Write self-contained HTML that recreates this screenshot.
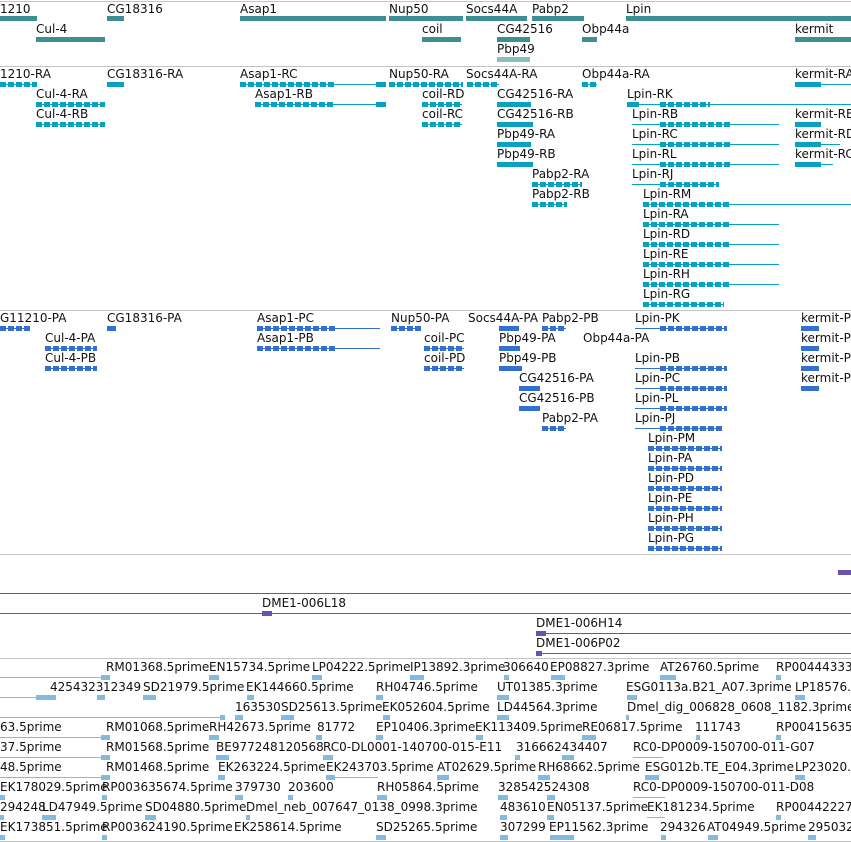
<!DOCTYPE html>
<html><head><meta charset="utf-8"><style>
body{margin:0;width:851px;height:842px;overflow:hidden;background:#fff;position:relative;font-family:"DejaVu Sans","Liberation Sans",sans-serif}
.t{position:absolute;font-size:12px;line-height:14px;white-space:nowrap;color:#111}
.b{position:absolute;height:5px}
.l{position:absolute;height:1px}
.h{position:absolute;left:0;width:851px;height:1px;background:#c4c4c4}
.T{background:#3e8f94}
.C{background:#0aa0c0}.Cl{background:#0aa0c0}
.Cg{background:repeating-linear-gradient(90deg,#0aa0c0 0 6px,transparent 6px 8px),linear-gradient(to bottom,transparent 2px,#0aa0c0 2px 3px,transparent 3px)}
.P{background:#3370d0}.Pl{background:#3370d0}
.Pg{background:repeating-linear-gradient(90deg,#3370d0 0 6px,transparent 6px 8px),linear-gradient(to bottom,transparent 2px,#3370d0 2px 3px,transparent 3px)}
.V{background:#6a52aa}
.E{background:#82bae0}
</style></head><body>
<div class="h" style="top:1px"></div>
<!-- section 1 -->
<div class="t" style="left:0;top:2px">1210</div><div class="b T" style="left:0;top:16px;width:37px"></div>
<div class="t" style="left:107px;top:2px">CG18316</div><div class="b T" style="left:107px;top:16px;width:17px"></div>
<div class="t" style="left:240px;top:2px">Asap1</div><div class="b T" style="left:240px;top:16px;width:146px"></div>
<div class="t" style="left:389px;top:2px">Nup50</div><div class="b T" style="left:389px;top:16px;width:74px"></div>
<div class="t" style="left:466px;top:2px">Socs44A</div><div class="b T" style="left:466px;top:16px;width:61px"></div>
<div class="t" style="left:532px;top:2px">Pabp2</div><div class="b T" style="left:532px;top:16px;width:52px"></div>
<div class="t" style="left:626px;top:2px">Lpin</div><div class="b T" style="left:626px;top:16px;width:225px"></div>
<div class="t" style="left:36px;top:22px">Cul-4</div><div class="b T" style="left:36px;top:37px;width:69px"></div>
<div class="t" style="left:422px;top:22px">coil</div><div class="b T" style="left:422px;top:37px;width:39px"></div>
<div class="t" style="left:497px;top:22px">CG42516</div><div class="b T" style="left:497px;top:37px;width:33px"></div>
<div class="t" style="left:582px;top:22px">Obp44a</div><div class="b T" style="left:582px;top:37px;width:15px"></div>
<div class="t" style="left:795px;top:22px">kermit</div><div class="b T" style="left:795px;top:37px;width:56px"></div>
<div class="t" style="left:497px;top:42px">Pbp49</div><div class="b T" style="left:497px;top:57px;width:33px;opacity:.6"></div>
<div class="h" style="top:66px"></div>
<!-- section 2 -->
<div class="t" style="left:0;top:67px">1210-RA</div><div class="b Cg" style="left:0;top:82px;width:37px"></div>
<div class="t" style="left:107px;top:67px">CG18316-RA</div><div class="b C" style="left:107px;top:82px;width:17px"></div>
<div class="t" style="left:240px;top:67px">Asap1-RC</div><div class="l Cl" style="left:240px;top:84px;width:146px"></div><div class="b Cg" style="left:240px;top:82px;width:95px"></div><div class="b C" style="left:376px;top:82px;width:10px"></div>
<div class="t" style="left:389px;top:67px">Nup50-RA</div><div class="b Cg" style="left:389px;top:82px;width:74px"></div>
<div class="t" style="left:466px;top:67px">Socs44A-RA</div><div class="b Cg" style="left:467px;top:82px;width:32px"></div>
<div class="t" style="left:582px;top:67px">Obp44a-RA</div><div class="b Cg" style="left:582px;top:82px;width:15px"></div>
<div class="t" style="left:795px;top:67px">kermit-RA</div><div class="l Cl" style="left:795px;top:84px;width:56px"></div><div class="b C" style="left:795px;top:82px;width:26px"></div>

<div class="t" style="left:36px;top:87px">Cul-4-RA</div><div class="b Cg" style="left:36px;top:102px;width:69px"></div>
<div class="t" style="left:255px;top:87px">Asap1-RB</div><div class="l Cl" style="left:255px;top:104px;width:131px"></div><div class="b Cg" style="left:255px;top:102px;width:80px"></div><div class="b C" style="left:376px;top:102px;width:10px"></div>
<div class="t" style="left:422px;top:87px">coil-RD</div><div class="b Cg" style="left:422px;top:102px;width:40px"></div>
<div class="t" style="left:497px;top:87px">CG42516-RA</div><div class="b C" style="left:497px;top:102px;width:34px"></div>
<div class="t" style="left:627px;top:87px">Lpin-RK</div><div class="l Cl" style="left:627px;top:104px;width:224px"></div><div class="b C" style="left:627px;top:102px;width:12px"></div><div class="b Cg" style="left:660px;top:102px;width:50px"></div>

<div class="t" style="left:36px;top:107px">Cul-4-RB</div><div class="b Cg" style="left:36px;top:122px;width:69px"></div>
<div class="t" style="left:422px;top:107px">coil-RC</div><div class="b Cg" style="left:422px;top:122px;width:40px"></div>
<div class="t" style="left:497px;top:107px">CG42516-RB</div><div class="b C" style="left:497px;top:122px;width:36px"></div>
<div class="t" style="left:632px;top:107px">Lpin-RB</div><div class="l Cl" style="left:632px;top:124px;width:147px"></div><div class="b Cg" style="left:660px;top:122px;width:70px"></div>
<div class="t" style="left:795px;top:107px">kermit-RB</div><div class="b C" style="left:795px;top:122px;width:26px"></div>

<div class="t" style="left:497px;top:127px">Pbp49-RA</div><div class="b C" style="left:497px;top:142px;width:34px"></div>
<div class="t" style="left:632px;top:127px">Lpin-RC</div><div class="l Cl" style="left:632px;top:144px;width:147px"></div><div class="b Cg" style="left:660px;top:142px;width:70px"></div>
<div class="t" style="left:795px;top:127px">kermit-RD</div><div class="l Cl" style="left:795px;top:144px;width:45px"></div><div class="b C" style="left:795px;top:142px;width:26px"></div>

<div class="t" style="left:497px;top:147px">Pbp49-RB</div><div class="b C" style="left:497px;top:162px;width:36px"></div>
<div class="t" style="left:632px;top:147px">Lpin-RL</div><div class="l Cl" style="left:632px;top:164px;width:147px"></div><div class="b Cg" style="left:660px;top:162px;width:70px"></div>
<div class="t" style="left:795px;top:147px">kermit-RC</div><div class="l Cl" style="left:795px;top:164px;width:38px"></div><div class="b C" style="left:795px;top:162px;width:26px"></div>

<div class="t" style="left:532px;top:167px">Pabp2-RA</div><div class="b Cg" style="left:532px;top:182px;width:50px"></div>
<div class="t" style="left:632px;top:167px">Lpin-RJ</div><div class="l Cl" style="left:632px;top:184px;width:87px"></div><div class="b Cg" style="left:660px;top:182px;width:59px"></div>
<div class="t" style="left:532px;top:187px">Pabp2-RB</div><div class="b Cg" style="left:532px;top:202px;width:35px"></div>
<div class="t" style="left:643px;top:187px">Lpin-RM</div><div class="l Cl" style="left:643px;top:204px;width:208px"></div><div class="b Cg" style="left:643px;top:202px;width:87px"></div>
<div class="t" style="left:643px;top:207px">Lpin-RA</div><div class="l Cl" style="left:643px;top:224px;width:136px"></div><div class="b Cg" style="left:643px;top:222px;width:87px"></div>
<div class="t" style="left:643px;top:227px">Lpin-RD</div><div class="l Cl" style="left:643px;top:244px;width:136px"></div><div class="b Cg" style="left:643px;top:242px;width:87px"></div>
<div class="t" style="left:643px;top:247px">Lpin-RE</div><div class="l Cl" style="left:643px;top:264px;width:136px"></div><div class="b Cg" style="left:643px;top:262px;width:87px"></div>
<div class="t" style="left:643px;top:267px">Lpin-RH</div><div class="l Cl" style="left:643px;top:284px;width:136px"></div><div class="b Cg" style="left:643px;top:282px;width:87px"></div>
<div class="t" style="left:643px;top:287px">Lpin-RG</div><div class="b Cg" style="left:643px;top:302px;width:81px"></div>
<div class="h" style="top:310px"></div>
<!-- section 3 -->
<div class="t" style="left:0;top:311px">G11210-PA</div><div class="b Pg" style="left:0;top:326px;width:30px"></div>
<div class="t" style="left:107px;top:311px">CG18316-PA</div><div class="b P" style="left:107px;top:326px;width:9px"></div>
<div class="t" style="left:257px;top:311px">Asap1-PC</div><div class="l Pl" style="left:257px;top:328px;width:123px"></div><div class="b Pg" style="left:257px;top:326px;width:78px"></div>
<div class="t" style="left:391px;top:311px">Nup50-PA</div><div class="b Pg" style="left:391px;top:326px;width:30px"></div>
<div class="t" style="left:468px;top:311px">Socs44A-PA</div><div class="b P" style="left:499px;top:326px;width:20px"></div>
<div class="t" style="left:542px;top:311px">Pabp2-PB</div><div class="b Pg" style="left:542px;top:326px;width:24px"></div>
<div class="t" style="left:635px;top:311px">Lpin-PK</div><div class="l Pl" style="left:635px;top:328px;width:92px"></div><div class="b Pg" style="left:660px;top:326px;width:67px"></div>
<div class="t" style="left:801px;top:311px">kermit-P</div><div class="b P" style="left:801px;top:326px;width:18px"></div>

<div class="t" style="left:45px;top:331px">Cul-4-PA</div><div class="b Pg" style="left:45px;top:346px;width:52px"></div>
<div class="t" style="left:257px;top:331px">Asap1-PB</div><div class="l Pl" style="left:257px;top:348px;width:123px"></div><div class="b Pg" style="left:257px;top:346px;width:78px"></div>
<div class="t" style="left:424px;top:331px">coil-PC</div><div class="b Pg" style="left:424px;top:346px;width:40px"></div>
<div class="t" style="left:499px;top:331px">Pbp49-PA</div><div class="b P" style="left:499px;top:346px;width:21px"></div>
<div class="t" style="left:583px;top:331px">Obp44a-PA</div>
<div class="t" style="left:801px;top:331px">kermit-P</div><div class="b P" style="left:801px;top:346px;width:18px"></div>

<div class="t" style="left:45px;top:351px">Cul-4-PB</div><div class="b Pg" style="left:45px;top:366px;width:52px"></div>
<div class="t" style="left:424px;top:351px">coil-PD</div><div class="b Pg" style="left:424px;top:366px;width:40px"></div>
<div class="t" style="left:499px;top:351px">Pbp49-PB</div><div class="b P" style="left:499px;top:366px;width:23px"></div>
<div class="t" style="left:635px;top:351px">Lpin-PB</div><div class="l Pl" style="left:635px;top:368px;width:92px"></div><div class="b Pg" style="left:660px;top:366px;width:67px"></div>
<div class="t" style="left:801px;top:351px">kermit-P</div><div class="b P" style="left:801px;top:366px;width:18px"></div>

<div class="t" style="left:519px;top:371px">CG42516-PA</div><div class="b P" style="left:519px;top:386px;width:21px"></div>
<div class="t" style="left:635px;top:371px">Lpin-PC</div><div class="l Pl" style="left:635px;top:388px;width:92px"></div><div class="b Pg" style="left:660px;top:386px;width:67px"></div>
<div class="t" style="left:801px;top:371px">kermit-P</div><div class="b P" style="left:801px;top:386px;width:18px"></div>
<div class="t" style="left:519px;top:391px">CG42516-PB</div><div class="b P" style="left:519px;top:406px;width:21px"></div>
<div class="t" style="left:635px;top:391px">Lpin-PL</div><div class="l Pl" style="left:635px;top:408px;width:92px"></div><div class="b Pg" style="left:660px;top:406px;width:67px"></div>
<div class="t" style="left:542px;top:411px">Pabp2-PA</div><div class="b Pg" style="left:542px;top:426px;width:24px"></div>
<div class="t" style="left:635px;top:411px">Lpin-PJ</div><div class="l Pl" style="left:635px;top:428px;width:87px"></div><div class="b Pg" style="left:660px;top:426px;width:62px"></div>
<div class="t" style="left:648px;top:431px">Lpin-PM</div><div class="b Pg" style="left:648px;top:446px;width:74px"></div>
<div class="t" style="left:648px;top:451px">Lpin-PA</div><div class="b Pg" style="left:648px;top:466px;width:74px"></div>
<div class="t" style="left:648px;top:471px">Lpin-PD</div><div class="b Pg" style="left:648px;top:486px;width:74px"></div>
<div class="t" style="left:648px;top:491px">Lpin-PE</div><div class="b Pg" style="left:648px;top:506px;width:74px"></div>
<div class="t" style="left:648px;top:511px">Lpin-PH</div><div class="b Pg" style="left:648px;top:526px;width:74px"></div>
<div class="t" style="left:648px;top:531px">Lpin-PG</div><div class="b Pg" style="left:648px;top:546px;width:74px"></div>
<div class="h" style="top:554px"></div>
<div class="b V" style="left:838px;top:570px;width:13px"></div>
<div class="l V" style="left:0;top:593px;width:851px"></div>
<div class="t" style="left:262px;top:596px">DME1-006L18</div><div class="l V" style="left:262px;top:613px;width:589px"></div><div class="b V" style="left:262px;top:611px;width:10px"></div>
<div class="l V" style="left:0;top:613px;width:262px"></div>
<div class="t" style="left:536px;top:616px">DME1-006H14</div><div class="l V" style="left:536px;top:633px;width:315px"></div><div class="b V" style="left:536px;top:631px;width:10px"></div>
<div class="t" style="left:536px;top:636px">DME1-006P02</div><div class="l V" style="left:536px;top:653px;width:315px"></div><div class="b V" style="left:536px;top:651px;width:6px"></div>
<div class="h" style="top:658px"></div>
<!-- ESTs -->
<div class="t" style="left:106px;top:660px">RM01368.5prime</div><div class="t" style="left:209px;top:660px">EN15734.5prime</div><div class="t" style="left:312px;top:660px">LP04222.5prime</div><div class="t" style="left:410px;top:660px">IP13892.3prime</div><div class="t" style="left:503px;top:660px">306640</div><div class="t" style="left:550px;top:660px">EP08827.3prime</div><div class="t" style="left:660px;top:660px">AT26760.5prime</div><div class="t" style="left:776px;top:660px">RP00444333</div>
<div class="l E" style="left:0;top:677px;width:106px"></div><div class="b E" style="left:101px;top:675px;width:9px"></div><div class="b E" style="left:209px;top:675px;width:10px"></div><div class="b E" style="left:312px;top:675px;width:10px"></div><div class="b E" style="left:410px;top:675px;width:14px"></div><div class="b E" style="left:504px;top:675px;width:5px"></div><div class="b E" style="left:551px;top:675px;width:14px"></div><div class="b E" style="left:660px;top:675px;width:16px"></div><div class="b E" style="left:776px;top:675px;width:5px"></div>
<div class="t" style="left:50px;top:680px">4254323</div><div class="t" style="left:103px;top:680px">12349</div><div class="t" style="left:143px;top:680px">SD21979.5prime</div><div class="t" style="left:246px;top:680px">EK144660.5prime</div><div class="t" style="left:376px;top:680px">RH04746.5prime</div><div class="t" style="left:497px;top:680px">UT01385.3prime</div><div class="t" style="left:626px;top:680px">ESG0113a.B21_A07.3prime</div><div class="t" style="left:795px;top:680px">LP18576.</div>
<div class="l E" style="left:0;top:697px;width:40px"></div><div class="b E" style="left:36px;top:695px;width:20px"></div><div class="b E" style="left:97px;top:695px;width:8px"></div><div class="b E" style="left:143px;top:695px;width:13px"></div><div class="b E" style="left:247px;top:695px;width:7px"></div><div class="b E" style="left:376px;top:695px;width:7px"></div><div class="b E" style="left:497px;top:695px;width:12px"></div><div class="b E" style="left:627px;top:695px;width:10px"></div><div class="b E" style="left:795px;top:695px;width:10px"></div>
<div class="t" style="left:235px;top:700px">163530</div><div class="t" style="left:281px;top:700px">SD25613.5prime</div><div class="t" style="left:382px;top:700px">EK052604.5prime</div><div class="t" style="left:497px;top:700px">LD44564.3prime</div><div class="t" style="left:627px;top:700px">Dmel_dig_006828_0608_1182.3prime</div>
<div class="l E" style="left:0;top:717px;width:225px"></div><div class="b E" style="left:220px;top:715px;width:5px"></div><div class="b E" style="left:235px;top:715px;width:8px"></div><div class="b E" style="left:281px;top:715px;width:13px"></div><div class="b E" style="left:383px;top:715px;width:7px"></div><div class="b E" style="left:497px;top:715px;width:12px"></div><div class="b E" style="left:626px;top:715px;width:3px"></div>
<div class="t" style="left:0;top:720px">63.5prime</div><div class="t" style="left:106px;top:720px">RM01068.5prime</div><div class="t" style="left:209px;top:720px">RH42673.5prime</div><div class="t" style="left:317px;top:720px">81772</div><div class="t" style="left:376px;top:720px">EP10406.3prime</div><div class="t" style="left:475px;top:720px">EK113409.5prime</div><div class="t" style="left:582px;top:720px">RE06817.5prime</div><div class="t" style="left:695px;top:720px">111743</div><div class="t" style="left:776px;top:720px">RP00415635</div>
<div class="l E" style="left:0;top:737px;width:106px"></div><div class="b E" style="left:101px;top:735px;width:9px"></div><div class="b E" style="left:209px;top:735px;width:10px"></div><div class="b E" style="left:316px;top:735px;width:6px"></div><div class="b E" style="left:376px;top:735px;width:7px"></div><div class="b E" style="left:476px;top:735px;width:7px"></div><div class="b E" style="left:582px;top:735px;width:14px"></div><div class="b E" style="left:696px;top:735px;width:4px"></div><div class="b E" style="left:776px;top:735px;width:5px"></div>
<div class="t" style="left:0;top:740px">37.5prime</div><div class="t" style="left:106px;top:740px">RM01568.5prime</div><div class="t" style="left:216px;top:740px">BE977248</div><div class="t" style="left:278px;top:740px">120568</div><div class="t" style="left:323px;top:740px">RC0-DL0001-140700-015-E11</div><div class="t" style="left:516px;top:740px">316662434407</div><div class="t" style="left:633px;top:740px">RC0-DP0009-150700-011-G07</div>
<div class="l E" style="left:0;top:757px;width:106px"></div><div class="b E" style="left:101px;top:755px;width:9px"></div><div class="b E" style="left:216px;top:755px;width:13px"></div><div class="b E" style="left:323px;top:755px;width:10px"></div><div class="b E" style="left:515px;top:755px;width:5px"></div><div class="b E" style="left:562px;top:755px;width:12px"></div><div class="l E" style="left:633px;top:757px;width:30px"></div>
<div class="t" style="left:0;top:760px">48.5prime</div><div class="t" style="left:106px;top:760px">RM01468.5prime</div><div class="t" style="left:218px;top:760px">EK263224.5prime</div><div class="t" style="left:326px;top:760px">EK243703.5prime</div><div class="t" style="left:437px;top:760px">AT02629.5prime</div><div class="t" style="left:538px;top:760px">RH68662.5prime</div><div class="t" style="left:645px;top:760px">ESG012b.TE_E04.3prime</div><div class="t" style="left:795px;top:760px">LP23020.</div>
<div class="l E" style="left:0;top:777px;width:106px"></div><div class="b E" style="left:101px;top:775px;width:9px"></div><div class="b E" style="left:218px;top:775px;width:7px"></div><div class="l E" style="left:326px;top:777px;width:52px"></div><div class="b E" style="left:326px;top:775px;width:9px"></div><div class="b E" style="left:437px;top:775px;width:12px"></div><div class="b E" style="left:538px;top:775px;width:12px"></div><div class="b E" style="left:645px;top:775px;width:14px"></div><div class="b E" style="left:795px;top:775px;width:10px"></div>
<div class="t" style="left:0;top:780px">EK178029.5prime</div><div class="t" style="left:102px;top:780px">RP003635674.5prime</div><div class="t" style="left:235px;top:780px">379730</div><div class="t" style="left:288px;top:780px">203600</div><div class="t" style="left:377px;top:780px">RH05864.5prime</div><div class="t" style="left:498px;top:780px">328542524308</div><div class="t" style="left:633px;top:780px">RC0-DP0009-150700-011-D08</div>
<div class="b E" style="left:0;top:795px;width:5px"></div><div class="b E" style="left:102px;top:795px;width:5px"></div><div class="b E" style="left:235px;top:795px;width:8px"></div><div class="b E" style="left:288px;top:795px;width:5px"></div><div class="b E" style="left:377px;top:795px;width:10px"></div><div class="b E" style="left:498px;top:795px;width:10px"></div><div class="b E" style="left:547px;top:795px;width:8px"></div><div class="l E" style="left:633px;top:797px;width:32px"></div>
<div class="t" style="left:0;top:800px">294248</div><div class="t" style="left:42px;top:800px">LD47949.5prime</div><div class="t" style="left:145px;top:800px">SD04880.5prime</div><div class="t" style="left:246px;top:800px">Dmel_neb_007647_0138_0998.3prime</div><div class="t" style="left:500px;top:800px">483610</div><div class="t" style="left:547px;top:800px">EN05137.5prime</div><div class="t" style="left:647px;top:800px">EK181234.5prime</div><div class="t" style="left:776px;top:800px">RP00442227</div>
<div class="b E" style="left:0;top:815px;width:4px"></div><div class="b E" style="left:42px;top:815px;width:14px"></div><div class="b E" style="left:145px;top:815px;width:11px"></div><div class="b E" style="left:246px;top:815px;width:4px"></div><div class="b E" style="left:500px;top:815px;width:7px"></div><div class="b E" style="left:547px;top:815px;width:7px"></div><div class="l E" style="left:647px;top:817px;width:18px"></div><div class="b E" style="left:776px;top:815px;width:5px"></div>
<div class="t" style="left:0;top:820px">EK173851.5prime</div><div class="t" style="left:102px;top:820px">RP003624190.5prime</div><div class="t" style="left:234px;top:820px">EK258614.5prime</div><div class="t" style="left:376px;top:820px">SD25265.5prime</div><div class="t" style="left:500px;top:820px">307299</div><div class="t" style="left:549px;top:820px">EP11562.3prime</div><div class="t" style="left:660px;top:820px">294326</div><div class="t" style="left:707px;top:820px">AT04949.5prime</div><div class="t" style="left:808px;top:820px">295032</div>
<div class="b E" style="left:0;top:835px;width:5px"></div><div class="b E" style="left:102px;top:835px;width:5px"></div><div class="b E" style="left:376px;top:835px;width:10px"></div><div class="b E" style="left:500px;top:835px;width:8px"></div><div class="b E" style="left:550px;top:835px;width:24px"></div><div class="b E" style="left:661px;top:835px;width:5px"></div><div class="b E" style="left:708px;top:835px;width:10px"></div><div class="b E" style="left:808px;top:835px;width:8px"></div>
<div class="h" style="top:841px"></div>
</body></html>
